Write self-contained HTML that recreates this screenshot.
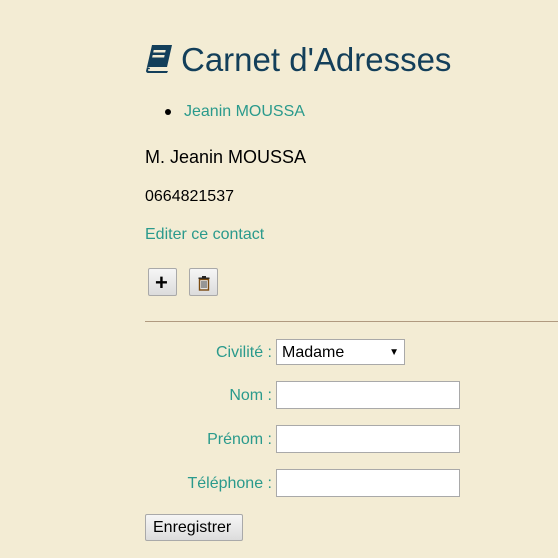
<!DOCTYPE html>
<html><head><meta charset="utf-8"><style>
body{margin:0;width:558px;height:558px;background:#f3ecd4;font-family:"Liberation Sans",sans-serif;position:relative;overflow:hidden}
.a{position:absolute;white-space:nowrap}
.t{color:#2a9a8c}
.btn{position:absolute;background:linear-gradient(#f6f6f6,#dcdcdc);border:1px solid #a9a9a9;border-radius:2px;box-sizing:border-box}
.inp{position:absolute;background:#fff;border:1px solid #a9a9a9;box-sizing:border-box}
.lbl{position:absolute;right:286px;font-size:16px;color:#2a9a8c}
</style></head><body>
<svg class="a" style="left:144px;top:44px" width="30" height="30" viewBox="0 0 30 30">
<path d="M8 1h20l-5 22H3z" fill="#133f5a"/>
<path d="M3 23l-1 4c0 1 1 2 2 2h19l1-2H5l1-3z" fill="#133f5a"/>
<path d="M4 26h20" stroke="#f3ecd4" stroke-width="1.5"/>
<rect x="11" y="6" width="12" height="2.5" fill="#f3ecd4" transform="skewX(-12)"/>
<rect x="11" y="11" width="12" height="2.5" fill="#f3ecd4" transform="skewX(-12)"/>
</svg>
<div class="a" style="left:181px;top:41px;font-size:33px;color:#133f5a">Carnet d'Adresses</div>
<div class="a" style="left:165px;top:109px;width:6px;height:6px;border-radius:50%;background:#000"></div>
<div class="a t" style="left:184px;top:103px;font-size:16px">Jeanin MOUSSA</div>
<div class="a" style="left:145px;top:147px;font-size:18px;color:#000">M. Jeanin MOUSSA</div>
<div class="a" style="left:145px;top:188px;font-size:16px;color:#000">0664821537</div>
<div class="a t" style="left:145px;top:226px;font-size:16px">Editer ce contact</div>
<div class="btn" style="left:148px;top:268px;width:29px;height:28px"><div class="a" style="left:6px;top:1px;font-size:22px;font-weight:bold">+</div></div>
<div class="btn" style="left:189px;top:268px;width:29px;height:28px">
<svg class="a" style="left:7px;top:6px" width="14" height="16" viewBox="0 0 14 16"><path d="M5 1h4v1.5H5z M1.5 2.5h11v1.5h-11z" fill="#222"/><rect x="2.5" y="4.5" width="9" height="10.5" fill="none" stroke="#7a4a10" stroke-width="1.4"/><path d="M5 6v7M7 6v7M9 6v7" stroke="#333" stroke-width="0.9"/></svg></div>
<div class="a" style="left:145px;top:321px;width:413px;height:1px;background:#b09a80"></div>
<div class="lbl" style="top:344px">Civilité :</div>
<div class="inp" style="left:276px;top:339px;width:129px;height:26px"><span class="a" style="left:5px;top:4px;font-size:16px;color:#000">Madame</span><span class="a" style="right:5px;top:7px;font-size:10px">▼</span></div>
<div class="lbl" style="top:387px">Nom :</div>
<div class="inp" style="left:276px;top:381px;width:184px;height:28px"></div>
<div class="lbl" style="top:431px">Prénom :</div>
<div class="inp" style="left:276px;top:425px;width:184px;height:28px"></div>
<div class="lbl" style="top:475px">Téléphone :</div>
<div class="inp" style="left:276px;top:469px;width:184px;height:28px"></div>
<div class="btn" style="left:145px;top:514px;width:98px;height:27px"><span class="a" style="left:7px;top:4px;font-size:16px;color:#000">Enregistrer</span></div>
</body></html>
